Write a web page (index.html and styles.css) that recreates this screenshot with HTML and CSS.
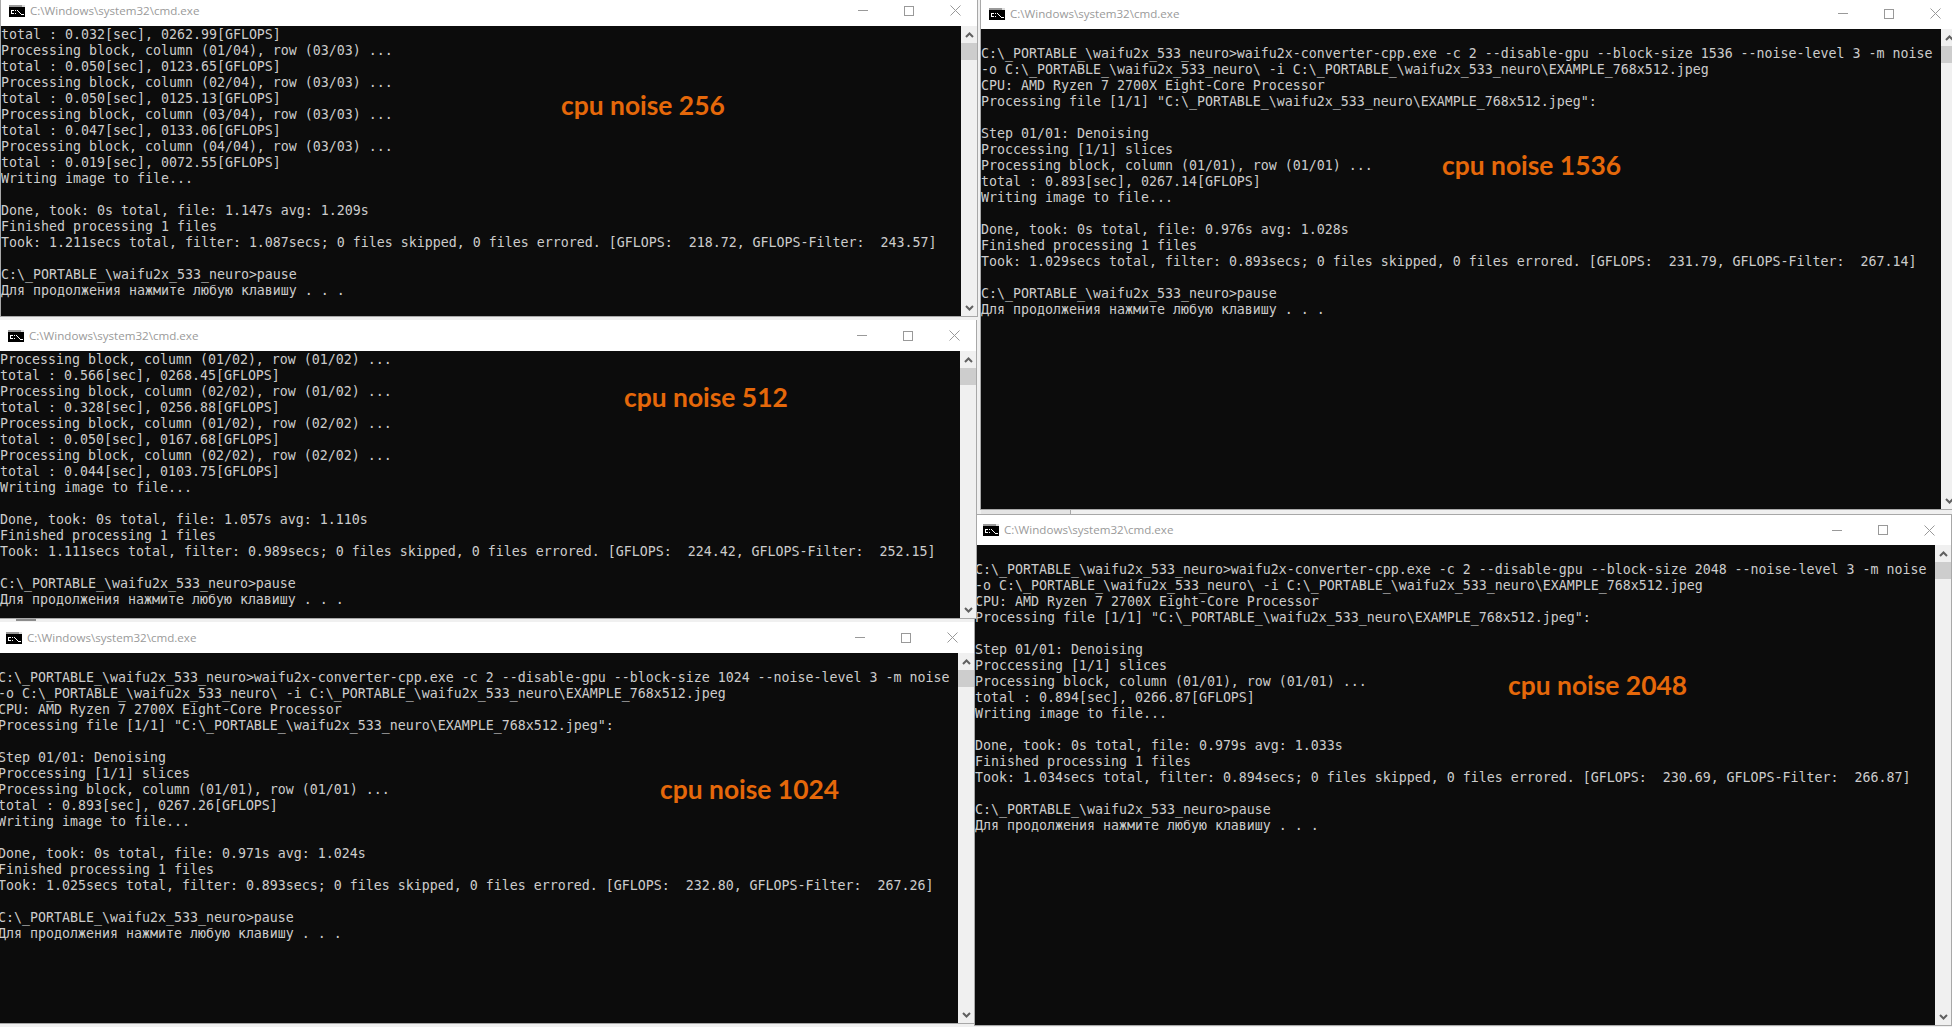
FILE: index.html
```html
<!DOCTYPE html>
<html lang="ru">
<head>
<meta charset="utf-8">
<title>cmd.exe</title>
<link rel="stylesheet" href="styles.css">
</head>
<body>
<svg class="defs" aria-hidden="true">
  <symbol id="ico" viewBox="0 0 16 12">
    <rect width="16" height="12" fill="#000"/>
    <rect width="16" height="2" fill="#9a9a9a"/>
    <rect x="13" y="0" width="3" height="2" fill="#dcdcdc"/>
    <path d="M2 5h3v1H2zM2 6h1v2H2zM2 8h3v1H2zM6 5h1v1H6zM6 8h1v1H6zM8 5h1v1H8zM9 6h1v1H9zM10 7h1v1h-1zM11 8h1v1h-1zM12 9h3v1h-3z" fill="#fff"/>
  </symbol>
  <symbol id="up" viewBox="0 0 9 6"><path d="M1 5l3.5-3.5L8 5" fill="none" stroke="#606060" stroke-width="2"/></symbol>
  <symbol id="down" viewBox="0 0 9 6"><path d="M1 1l3.5 3.5L8 1" fill="none" stroke="#606060" stroke-width="2"/></symbol>
  <symbol id="close" viewBox="0 0 11 11"><path d="M.5.5l10 10M10.500.5l-10 10" fill="none" stroke="#999" stroke-width="1"/></symbol>
</svg>

<main class="desktop">

  <section class="win win-top-right">
    <header class="bar">
      <svg class="ico"><use href="#ico"/></svg><span class="name">C:\Windows\system32\cmd.exe</span>
      <div class="ctrls"><span class="btn"><i class="min"></i></span><span class="btn"><i class="max"></i></span><span class="btn"><svg class="x"><use href="#close"/></svg></span></div>
    </header>
    <div class="body">
<pre class="con">

C:\_PORTABLE_\waifu2x_533_neuro>waifu2x-converter-cpp.exe -c 2 --disable-gpu --block-size 1536 --noise-level 3 -m noise
-o C:\_PORTABLE_\waifu2x_533_neuro\ -i C:\_PORTABLE_\waifu2x_533_neuro\EXAMPLE_768x512.jpeg
CPU: AMD Ryzen 7 2700X Eight-Core Processor
Processing file [1/1] "C:\_PORTABLE_\waifu2x_533_neuro\EXAMPLE_768x512.jpeg":

Step 01/01: Denoising
Proccessing [1/1] slices
Processing block, column (01/01), row (01/01) ...
total : 0.893[sec], 0267.14[GFLOPS]
Writing image to file...

Done, took: 0s total, file: 0.976s avg: 1.028s
Finished processing 1 files
Took: 1.029secs total, filter: 0.893secs; 0 files skipped, 0 files errored. [GFLOPS:  231.79, GFLOPS-Filter:  267.14]

C:\_PORTABLE_\waifu2x_533_neuro>pause
Для продолжения нажмите любую клавишу . . .
</pre>
      <div class="sb"><span class="arr"><svg class="chev"><use href="#up"/></svg></span><span class="thumb"></span><span class="track"></span><span class="arr"><svg class="chev"><use href="#down"/></svg></span></div>
    </div>
  </section>

  <section class="win win-bottom-right">
    <header class="bar">
      <svg class="ico"><use href="#ico"/></svg><span class="name">C:\Windows\system32\cmd.exe</span>
      <div class="ctrls"><span class="btn"><i class="min"></i></span><span class="btn"><i class="max"></i></span><span class="btn"><svg class="x"><use href="#close"/></svg></span></div>
    </header>
    <div class="body">
<pre class="con">

C:\_PORTABLE_\waifu2x_533_neuro>waifu2x-converter-cpp.exe -c 2 --disable-gpu --block-size 2048 --noise-level 3 -m noise
-o C:\_PORTABLE_\waifu2x_533_neuro\ -i C:\_PORTABLE_\waifu2x_533_neuro\EXAMPLE_768x512.jpeg
CPU: AMD Ryzen 7 2700X Eight-Core Processor
Processing file [1/1] "C:\_PORTABLE_\waifu2x_533_neuro\EXAMPLE_768x512.jpeg":

Step 01/01: Denoising
Proccessing [1/1] slices
Processing block, column (01/01), row (01/01) ...
total : 0.894[sec], 0266.87[GFLOPS]
Writing image to file...

Done, took: 0s total, file: 0.979s avg: 1.033s
Finished processing 1 files
Took: 1.034secs total, filter: 0.894secs; 0 files skipped, 0 files errored. [GFLOPS:  230.69, GFLOPS-Filter:  266.87]

C:\_PORTABLE_\waifu2x_533_neuro>pause
Для продолжения нажмите любую клавишу . . .
</pre>
      <div class="sb"><span class="arr"><svg class="chev"><use href="#up"/></svg></span><span class="thumb"></span><span class="track"></span><span class="arr"><svg class="chev"><use href="#down"/></svg></span></div>
    </div>
  </section>

  <section class="win win-256">
    <header class="bar">
      <svg class="ico"><use href="#ico"/></svg><span class="name">C:\Windows\system32\cmd.exe</span>
      <div class="ctrls"><span class="btn"><i class="min"></i></span><span class="btn"><i class="max"></i></span><span class="btn"><svg class="x"><use href="#close"/></svg></span></div>
    </header>
    <div class="body">
<pre class="con">total : 0.032[sec], 0262.99[GFLOPS]
Processing block, column (01/04), row (03/03) ...
total : 0.050[sec], 0123.65[GFLOPS]
Processing block, column (02/04), row (03/03) ...
total : 0.050[sec], 0125.13[GFLOPS]
Processing block, column (03/04), row (03/03) ...
total : 0.047[sec], 0133.06[GFLOPS]
Processing block, column (04/04), row (03/03) ...
total : 0.019[sec], 0072.55[GFLOPS]
Writing image to file...

Done, took: 0s total, file: 1.147s avg: 1.209s
Finished processing 1 files
Took: 1.211secs total, filter: 1.087secs; 0 files skipped, 0 files errored. [GFLOPS:  218.72, GFLOPS-Filter:  243.57]

C:\_PORTABLE_\waifu2x_533_neuro>pause
Для продолжения нажмите любую клавишу . . .
</pre>
      <div class="sb"><span class="arr"><svg class="chev"><use href="#up"/></svg></span><span class="thumb"></span><span class="track"></span><span class="arr"><svg class="chev"><use href="#down"/></svg></span></div>
    </div>
  </section>

  <section class="win win-512">
    <header class="bar">
      <svg class="ico"><use href="#ico"/></svg><span class="name">C:\Windows\system32\cmd.exe</span>
      <div class="ctrls"><span class="btn"><i class="min"></i></span><span class="btn"><i class="max"></i></span><span class="btn"><svg class="x"><use href="#close"/></svg></span></div>
    </header>
    <div class="body">
<pre class="con">Processing block, column (01/02), row (01/02) ...
total : 0.566[sec], 0268.45[GFLOPS]
Processing block, column (02/02), row (01/02) ...
total : 0.328[sec], 0256.88[GFLOPS]
Processing block, column (01/02), row (02/02) ...
total : 0.050[sec], 0167.68[GFLOPS]
Processing block, column (02/02), row (02/02) ...
total : 0.044[sec], 0103.75[GFLOPS]
Writing image to file...

Done, took: 0s total, file: 1.057s avg: 1.110s
Finished processing 1 files
Took: 1.111secs total, filter: 0.989secs; 0 files skipped, 0 files errored. [GFLOPS:  224.42, GFLOPS-Filter:  252.15]

C:\_PORTABLE_\waifu2x_533_neuro>pause
Для продолжения нажмите любую клавишу . . .
</pre>
      <div class="sb"><span class="arr"><svg class="chev"><use href="#up"/></svg></span><span class="thumb"></span><span class="track"></span><span class="arr"><svg class="chev"><use href="#down"/></svg></span></div>
    </div>
  </section>

  <section class="win win-1024">
    <header class="bar">
      <svg class="ico"><use href="#ico"/></svg><span class="name">C:\Windows\system32\cmd.exe</span>
      <div class="ctrls"><span class="btn"><i class="min"></i></span><span class="btn"><i class="max"></i></span><span class="btn"><svg class="x"><use href="#close"/></svg></span></div>
    </header>
    <div class="body">
<pre class="con">

C:\_PORTABLE_\waifu2x_533_neuro>waifu2x-converter-cpp.exe -c 2 --disable-gpu --block-size 1024 --noise-level 3 -m noise
-o C:\_PORTABLE_\waifu2x_533_neuro\ -i C:\_PORTABLE_\waifu2x_533_neuro\EXAMPLE_768x512.jpeg
CPU: AMD Ryzen 7 2700X Eight-Core Processor
Processing file [1/1] "C:\_PORTABLE_\waifu2x_533_neuro\EXAMPLE_768x512.jpeg":

Step 01/01: Denoising
Proccessing [1/1] slices
Processing block, column (01/01), row (01/01) ...
total : 0.893[sec], 0267.26[GFLOPS]
Writing image to file...

Done, took: 0s total, file: 0.971s avg: 1.024s
Finished processing 1 files
Took: 1.025secs total, filter: 0.893secs; 0 files skipped, 0 files errored. [GFLOPS:  232.80, GFLOPS-Filter:  267.26]

C:\_PORTABLE_\waifu2x_533_neuro>pause
Для продолжения нажмите любую клавишу . . .
</pre>
      <div class="sb"><span class="arr"><svg class="chev"><use href="#up"/></svg></span><span class="thumb"></span><span class="track"></span><span class="arr"><svg class="chev"><use href="#down"/></svg></span></div>
    </div>
  </section>

  <span class="scrap scrap-a"></span>
  <span class="scrap scrap-b"></span>

  <strong class="tag tag-256">cpu noise 256</strong>
  <strong class="tag tag-512">cpu noise 512</strong>
  <strong class="tag tag-1024">cpu noise 1024</strong>
  <strong class="tag tag-1536">cpu noise 1536</strong>
  <strong class="tag tag-2048">cpu noise 2048</strong>
</main>
</body>
</html>
```
FILE: styles.css
```css
* { box-sizing: border-box; }
html, body { margin: 0; height: 100%; overflow: hidden; background: #f0f0f0; }
.defs { position: absolute; width: 0; height: 0; }
.desktop { position: relative; width: 1952px; height: 1027px; overflow: hidden; background: #f0f0f0; }

.win {
  position: absolute;
  width: 978px;
  display: flex;
  flex-direction: column;
  border: 1px solid #a8a8a8;
  border-top: 0;
  background: #fff;
}
.win-256 { left: 0; top: -5px; height: 322px; z-index: 3; }
.win-512 { left: -1px; top: 320px; height: 299px; z-index: 4; }
.win-1024 { left: -3px; top: 622px; height: 402px; z-index: 5; }
.win-top-right { left: 980px; top: -2px; height: 512px; z-index: 1; }
.win-bottom-right { left: 974px; top: 514px; height: 512px; z-index: 2; border-top: 1px solid #a8a8a8; }

.bar { flex: 0 0 31px; display: flex; align-items: center; background: #fff; padding-left: 8px; }
.win-bottom-right .bar { flex-basis: 30px; }
.ico { width: 16px; height: 12px; flex: none; }
.name {
  margin-left: 5px;
  font: 400 11.6px/16px "Open Sans", sans-serif;
  color: #9a9a9a;
  white-space: nowrap;
}
.ctrls { margin-left: auto; margin-right: -1px; display: flex; }
.btn { width: 46px; height: 30px; display: flex; align-items: center; justify-content: center; }
.min { display: block; width: 10px; height: 1px; background: #999; }
.max { display: block; width: 10px; height: 10px; border: 1px solid #999; }
.x { width: 11px; height: 11px; }

.body { flex: 1; min-height: 0; display: flex; background: #0c0c0c; }
.con {
  flex: 1;
  min-width: 0;
  margin: 0;
  padding-top: 1px;
  overflow: hidden;
  background: #0c0c0c;
  color: #cccccc;
  font: 400 13.29px/16px "DejaVu Sans Mono", monospace;
  white-space: pre;
}
.sb { flex: 0 0 16px; display: flex; flex-direction: column; background: #f0f0f0; }
.arr { flex: 0 0 17px; display: flex; align-items: center; justify-content: center; }
.chev { width: 9px; height: 6px; }
.thumb { flex: 0 0 17px; background: #cdcdcd; }
.track { flex: 1; }

.scrap { position: absolute; z-index: 6; display: block; }
.scrap-a { left: 16px; top: 619px; width: 20px; height: 2px; background: #8c8c8c; }
.scrap-b { left: 981px; top: 510px; width: 90px; height: 4px; background: #e4e4e4; border-right: 1px solid #a8a8a8; }

.tag {
  position: absolute;
  z-index: 7;
  font: 700 26.4px/30px Lato, sans-serif;
  color: #e5680a;
  white-space: nowrap;
}
.tag-256 { left: 561px; top: 90px; }
.tag-512 { left: 624px; top: 382px; }
.tag-1024 { left: 660px; top: 774px; }
.tag-1536 { left: 1442px; top: 150px; }
.tag-2048 { left: 1508px; top: 670px; }
```
